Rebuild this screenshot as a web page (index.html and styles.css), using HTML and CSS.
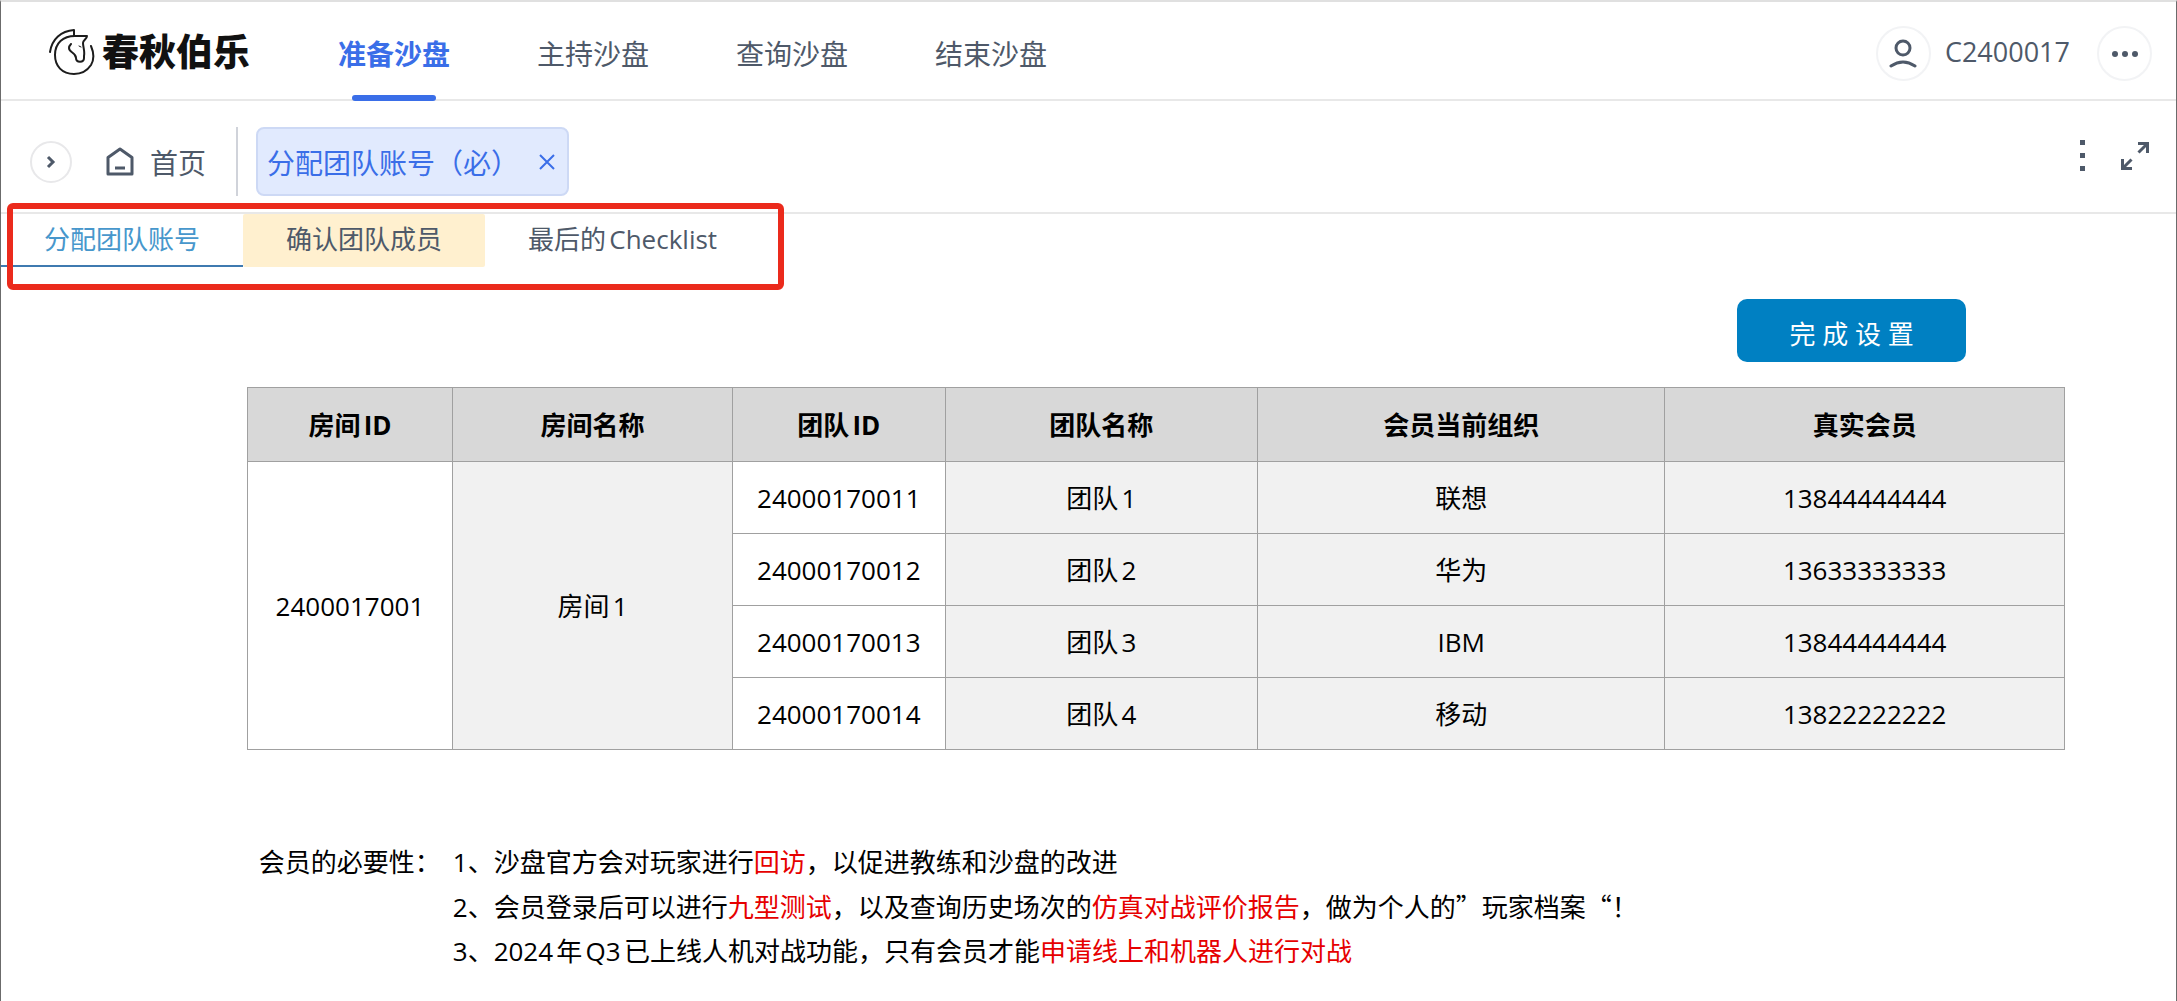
FILE: index.html
```html
<!DOCTYPE html>
<html lang="zh-CN">
<head>
    <meta charset="UTF-8">
    <title>分配团队账号</title>
    <link rel="stylesheet" href="styles.css">
</head>
<body>
<div class="app">
    <header class="header">
        <a class="logo" href="#">
            <svg width="48" height="48" viewBox="0 0 48 48" fill="none" stroke="#1c1c1c" stroke-linecap="round" stroke-linejoin="round">
                <path stroke-width="2" d="M2 24C4 11 13 3 26 2v6"/>
                <path stroke-width="2" d="M43 18c3 7 3 14 0 19-4 6-10 9-17 9C14 46 7 38 7 27 7 15 15 8 27 8h12c0 3-4 4-4 7 0 4 2 8 1 13v2c0 5-8 5-8 0 0-6-7-5-7-10 0-2 1-3 2-4"/>
                <path stroke-width="1" d="M31 18l2 1"/>
            </svg>
            <span>春秋伯乐</span>
        </a>
        <nav class="nav">
            <a class="active" href="#">准备沙盘</a>
            <a href="#">主持沙盘</a>
            <a href="#">查询沙盘</a>
            <a href="#">结束沙盘</a>
        </nav>
        <div class="user">
            <button class="round" type="button" aria-label="用户">
                <svg width="28" height="30" viewBox="0 0 28 30" fill="none" stroke="#4e5969" stroke-width="3" stroke-linecap="round">
                    <circle cx="14" cy="9" r="7"/>
                    <path d="M2 27q12-8 24 0"/>
                </svg>
            </button>
            <span class="name">C2400017</span>
            <button class="round" type="button" aria-label="更多">
                <svg width="28" height="8" viewBox="0 0 28 8" fill="#4e5969">
                    <circle cx="4" cy="4" r="3"/>
                    <circle cx="14" cy="4" r="3"/>
                    <circle cx="24" cy="4" r="3"/>
                </svg>
            </button>
        </div>
    </header>
    <div class="toolbar">
        <button class="collapse" type="button" aria-label="展开">
            <svg width="10" height="14" viewBox="0 0 10 14" fill="none" stroke="#4e5969" stroke-width="3"><path d="M2 2l5 5-5 5"/></svg>
        </button>
        <a class="home" href="#">
            <svg width="28" height="30" viewBox="0 0 28 30" fill="none" stroke="#4e5969" stroke-width="3" stroke-linejoin="round">
                <path d="M2 10.500L14 2l12 8.500V27H2zM9 21h10"/>
            </svg>
            <span>首页</span>
        </a>
        <div class="tag">
            <a href="#">分配团队账号（必）</a>
            <button type="button" aria-label="关闭">
                <svg width="18" height="18" viewBox="0 0 18 18" fill="none" stroke="#3a6ee8" stroke-width="2"><path d="M2 2l14 14M16 2L2 16"/></svg>
            </button>
        </div>
        <div class="tools">
            <button type="button" aria-label="菜单">
                <svg width="6" height="32" viewBox="0 0 6 32" fill="#4e5969"><path d="M0 0h5v5H0zM0 13h5v5H0zM0 26h5v5H0z"/></svg>
            </button>
            <button type="button" aria-label="全屏">
                <svg width="30" height="30" viewBox="0 0 30 30" fill="none" stroke="#4e5969" stroke-width="3"><path d="M18 2.500h9.500V12M27 3l-8.500 8.500M2.500 18v9.500H12M3 27l8.500-8.500"/></svg>
            </button>
        </div>
    </div>
    <nav class="tabs">
        <a class="active" href="#">分配团队账号</a>
        <a class="warn" href="#">确认团队成员</a>
        <a href="#">最后的Checklist</a>
        <span class="mark"></span>
    </nav>
    <main class="main">
        <div class="action">
            <button type="button">完 成 设 置</button>
        </div>
        <table class="table">
            <colgroup>
                <col class="c1">
                <col class="c2">
                <col class="c3">
                <col class="c4">
                <col class="c5">
                <col class="c6">
            </colgroup>
            <thead>
            <tr>
                <th>房间ID</th>
                <th>房间名称</th>
                <th>团队ID</th>
                <th>团队名称</th>
                <th>会员当前组织</th>
                <th>真实会员</th>
            </tr>
            </thead>
            <tbody>
            <tr>
                <td rowspan="4">2400017001</td>
                <td class="gray" rowspan="4">房间1</td>
                <td>24000170011</td>
                <td class="gray">团队1</td>
                <td class="gray">联想</td>
                <td class="gray">13844444444</td>
            </tr>
            <tr>
                <td>24000170012</td>
                <td class="gray">团队2</td>
                <td class="gray">华为</td>
                <td class="gray">13633333333</td>
            </tr>
            <tr>
                <td>24000170013</td>
                <td class="gray">团队3</td>
                <td class="gray">IBM</td>
                <td class="gray">13844444444</td>
            </tr>
            <tr>
                <td>24000170014</td>
                <td class="gray">团队4</td>
                <td class="gray">移动</td>
                <td class="gray">13822222222</td>
            </tr>
            </tbody>
        </table>
        <div class="notes">
            <div class="label">会员的必要性：</div>
            <div class="list">
                <p>1、沙盘官方会对玩家进行<em>回访</em>，以促进教练和沙盘的改进</p>
                <p>2、会员登录后可以进行<em>九型测试</em>，以及查询历史场次的<em>仿真对战评价报告</em>，做为个人的<span class="cjk">”玩家档案“！</span></p>
                <p>3、2024年Q3已上线人机对战功能，只有会员才能<em>申请线上和机器人进行对战</em></p>
            </div>
        </div>
    </main>
</div>
</body>
</html>
```
FILE: styles.css
```css
*{
    box-sizing: border-box;
}
body{
    margin: 0;
    font-family: "Open Sans","Noto Sans CJK SC",sans-serif;
    font-size: 26px;
    color: #000;
    background: #fff;
    text-autospace: normal;
}
a{
    color: inherit;
    text-decoration: none;
}
button{
    display: flex;
    align-items: center;
    justify-content: center;
    padding: 0;
    border: 0;
    background: none;
    font: inherit;
    cursor: pointer;
}
svg{
    display: block;
    flex: none;
}
.app{
    min-height: 100vh;
    border: 1px solid #6b6b6b;
    border-top: 2px solid #e0e0e0;
    border-bottom: 0;
}
/*顶部导航*/
.header{
    display: flex;
    height: 99px;
    padding: 0 24px 0 47px;
    border-bottom: 2px solid #e8e8e8;
    color: #4e5969;
}
.logo{
    display: flex;
    align-items: center;
    gap: 6px;
    width: 290px;
    padding-top: 2px;
    font-size: 37px;
    font-weight: 900;
    line-height: 40px;
    color: #111;
}
.nav{
    display: flex;
    gap: 87px;
    font-size: 28px;
}
.nav a{
    display: flex;
    flex-direction: column;
    align-items: center;
    height: 99px;
    line-height: 104px;
}
.nav .active{
    color: #3a6ee8;
    font-weight: bold;
}
.nav .active:after{
    content: "";
    flex: none;
    width: 84px;
    height: 6px;
    margin-top: -11px;
    border-radius: 3px;
    background: #3a6ee8;
}
.user{
    display: flex;
    align-items: center;
    margin-left: auto;
    padding-top: 6px;
}
.user .name{
    margin: 0 27px 0 14px;
    padding-bottom: 4px;
    font-size: 27px;
    line-height: 40px;
}
.round{
    width: 55px;
    height: 55px;
    border: 2px solid #f2f3f5;
    border-radius: 50%;
}
/*标签栏*/
.toolbar{
    display: flex;
    align-items: center;
    height: 113px;
    padding: 10px 26px 0 29px;
    border-bottom: 2px solid #e8e8e8;
    font-size: 28px;
    color: #4e5969;
}
.collapse{
    width: 42px;
    height: 42px;
    border: 2px solid #e8e8ea;
    border-radius: 50%;
}
.home{
    display: flex;
    align-items: center;
    gap: 16px;
    height: 69px;
    margin-left: 34px;
    padding-right: 30px;
    border-right: 2px solid #d0d3da;
}
.tag{
    display: flex;
    align-items: center;
    gap: 19px;
    height: 69px;
    margin-left: 18px;
    padding: 0 11px 0 9px;
    border: 2px solid #cdd9f5;
    border-radius: 8px;
    color: #3a6ee8;
    background: #e1eafe;
}
.tools{
    display: flex;
    align-items: center;
    gap: 34px;
    margin-left: auto;
    padding-bottom: 12px;
}
.tabs{
    position: relative;
    display: flex;
    width: max-content;
    color: #4e5969;
}
.tabs a{
    height: 53px;
    padding: 0 43px;
    line-height: 50px;
}
.tabs .active{
    border-bottom: 2px solid #3f7ab0;
    color: #4797cc;
}
.tabs .warn{
    border-radius: 2px;
    background: #fff0cf;
}
/*红框*/
.mark{
    position: absolute;
    top: -11px;
    right: -24px;
    bottom: -23px;
    left: 6px;
    border: 6px solid #eb2a1c;
    border-radius: 6px;
    pointer-events: none;
}
.main{
    padding: 32px 5.1% 0 11.3%;
}
.action{
    display: flex;
    justify-content: flex-end;
    padding-right: 99px;
}
.action button{
    width: 229px;
    height: 63px;
    padding-top: 4px;
    border-radius: 10px;
    color: #fff;
    background: #0080c2;
}
.table{
    width: 100%;
    margin-top: 25px;
    border-collapse: collapse;
    table-layout: fixed;
    line-height: 36px;
    text-align: center;
}
.table th,.table td{
    height: 72px;
    padding: 0;
    border: 1px solid #a0a0a0;
}
.table th{
    height: 74px;
    background: #d8d8d8;
}
.table .gray{
    background: #f1f1f1;
}
.c1{
    width: 11.3%;
}
.c2{
    width: 15.4%;
}
.c3{
    width: 11.7%;
}
.c4{
    width: 17.2%;
}
.c5{
    width: 22.4%;
}
.c6{
    width: 22%;
}
/*说明*/
.notes{
    display: flex;
    margin-top: 90px;
    padding-left: 12px;
    line-height: 44px;
}
.notes .label{
    width: 194px;
}
.notes p{
    margin: 0;
}
.notes em{
    font-style: normal;
    color: #e60000;
}
.cjk{
    font-family: "Noto Sans CJK SC",sans-serif;
}
```
